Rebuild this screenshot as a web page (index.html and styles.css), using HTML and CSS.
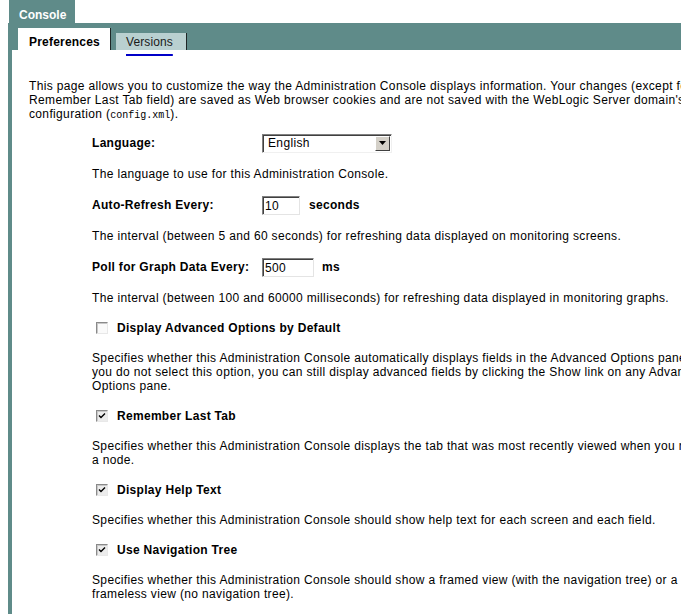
FILE: index.html
```html
<!DOCTYPE html>
<html>
<head>
<meta charset="utf-8">
<title>Console Preferences</title>
<link rel="stylesheet" href="styles.css">
</head>
<body>
<div class="page">
  <div class="head"><span class="console-tab">Console</span></div>
  <div class="frame">
    <div class="tabbar">
      <div class="tab tab-active">Preferences</div>
      <div class="tab tab-other"><a href="#" class="tab-link">Versions</a></div>
    </div>
    <div class="content">
      <p class="intro">This page allows you to customize the way the Administration Console displays information. Your changes (except for the Remember Last Tab field) are saved as Web browser cookies and are not saved with the WebLogic Server domain's configuration (<code class="mono">config.xml</code>).</p>
      <div class="form">
        <div class="row">
          <span class="lbl">Language:</span>
          <div class="select"><span class="select-text">English</span><span class="select-btn"><svg width="7" height="4" viewBox="0 0 7 4"><path d="M0 0H7L3.5 4Z" fill="#000"/></svg></span></div>
        </div>
        <p class="desc">The language to use for this Administration Console.</p>
        <div class="row">
          <span class="lbl">Auto-Refresh Every:</span>
          <span class="field field-short">10</span>
          <span class="unit">seconds</span>
        </div>
        <p class="desc">The interval (between 5 and 60 seconds) for refreshing data displayed on monitoring screens.</p>
        <div class="row">
          <span class="lbl">Poll for Graph Data Every:</span>
          <span class="field field-long">500</span>
          <span class="unit unit-ms">ms</span>
        </div>
        <p class="desc">The interval (between 100 and 60000 milliseconds) for refreshing data displayed in monitoring graphs.</p>
        <div class="row row-cb">
          <span class="cb"></span>
          <span class="cb-label">Display Advanced Options by Default</span>
        </div>
        <p class="desc">Specifies whether this Administration Console automatically displays fields in the Advanced Options pane. If<br>you do not select this option, you can still display advanced fields by clicking the Show link on any Advanced<br>Options pane.</p>
        <div class="row row-cb">
          <span class="cb cb-on"><svg width="10" height="10" viewBox="0 0 10 10"><path d="M2 4.5L4 6.5L8 2.5" fill="none" stroke="#000" stroke-width="1.4"/></svg></span>
          <span class="cb-label">Remember Last Tab</span>
        </div>
        <p class="desc">Specifies whether this Administration Console displays the tab that was most recently viewed when you return to a node.</p>
        <div class="row row-cb">
          <span class="cb cb-on"><svg width="10" height="10" viewBox="0 0 10 10"><path d="M2 4.5L4 6.5L8 2.5" fill="none" stroke="#000" stroke-width="1.4"/></svg></span>
          <span class="cb-label">Display Help Text</span>
        </div>
        <p class="desc">Specifies whether this Administration Console should show help text for each screen and each field.</p>
        <div class="row row-cb">
          <span class="cb cb-on"><svg width="10" height="10" viewBox="0 0 10 10"><path d="M2 4.5L4 6.5L8 2.5" fill="none" stroke="#000" stroke-width="1.4"/></svg></span>
          <span class="cb-label">Use Navigation Tree</span>
        </div>
        <p class="desc">Specifies whether this Administration Console should show a framed view (with the navigation tree) or a frameless view (no navigation tree).</p>
      </div>
    </div>
  </div>
</div>
</body>
</html>
```

FILE: styles.css
```css
html, body {
  margin: 0;
  padding: 0;
  overflow: hidden;
  background: #fff;
}
body {
  font-family: "Liberation Sans", Arial, sans-serif;
  font-size: 12px;
  letter-spacing: 0.35px;
  color: #000;
}
.page {
  width: 730px;
  padding-left: 8px;
}
.head {
  height: 23px;
  display: flex;
}
.console-tab {
  margin-left: 1px;
  width: 66px;
  box-sizing: border-box;
  background: #5f8b89;
  color: #fff;
  font-weight: bold;
  letter-spacing: 0;
  line-height: 12px;
  padding: 9px 0 0 10px;
}
.frame {
  border-left: 4px solid #5f8b89;
  min-height: 700px;
}
.tabbar {
  background: #5f8b89;
  height: 27px;
  display: flex;
  align-items: flex-end;
  padding-left: 6px;
  gap: 5px;
}
.tab {
  box-sizing: border-box;
  line-height: 14px;
  border-right: 1px solid #1e2626;
}
.tab-active {
  width: 93px;
  height: 22px;
  background: #fff;
  font-weight: bold;
  letter-spacing: 0.2px;
  padding: 7px 0 0 11px;
}
.tab-other {
  width: 71px;
  height: 17px;
  background: #b9d0d0;
  padding: 2px 0 0 10px;
  letter-spacing: 0.1px;
}
.tab-link {
  color: #1a1a1a;
  text-decoration: underline;
  text-decoration-color: #0000c8;
  text-decoration-thickness: 2px;
  text-underline-offset: 8px;
}
.content {
  padding: 29px 8px 0 17px;
}
.intro {
  margin: 0 0 10px;
  line-height: 14px;
}
.mono {
  font-family: "Liberation Mono", "Courier New", monospace;
  font-size: 10px;
  letter-spacing: 0;
}
.form {
  margin-left: 63px;
  display: flex;
  flex-direction: column;
  gap: 14px;
}
.row {
  display: flex;
  align-items: center;
  height: 20px;
}
.row-cb {
  height: 18px;
}
.lbl {
  width: 170px;
  font-weight: bold;
  letter-spacing: 0.3px;
}
.desc {
  margin: 0;
  line-height: 14px;
}
.select {
  width: 130px;
  height: 19px;
  box-sizing: border-box;
  display: flex;
  align-items: center;
  justify-content: space-between;
  border: 1px solid;
  border-color: #808080 #f0f0f0 #f0f0f0 #808080;
  box-shadow: inset 1px 1px 0 #404040;
  padding: 0 1px 0 5px;
  background: #fff;
}
.select-text {
  line-height: 14px;
}
.select-btn {
  width: 15px;
  height: 15px;
  box-sizing: border-box;
  background: #d4d0c8;
  border: 1px solid;
  border-color: #fff #404040 #404040 #fff;
  display: flex;
  align-items: center;
  justify-content: center;
}
.field {
  height: 19px;
  box-sizing: border-box;
  border: 1px solid;
  border-color: #808080 #e4e4e4 #e4e4e4 #808080;
  box-shadow: inset 1px 1px 0 #404040;
  padding: 2px 0 0 2px;
  line-height: 14px;
  background: #fff;
}
.field-short {
  width: 38px;
}
.field-long {
  width: 52px;
}
.unit {
  font-weight: bold;
  letter-spacing: 0.3px;
  margin-left: 9px;
}
.unit-ms {
  margin-left: 8px;
}
.cb {
  width: 12px;
  height: 12px;
  box-sizing: border-box;
  margin-left: 4px;
  border: 1px solid;
  border-color: #8a8a8a #e8e8e8 #e8e8e8 #8a8a8a;
  box-shadow: inset 1px 1px 0 #c8c8c8;
  background: #fafafa;
  display: flex;
  align-items: center;
  justify-content: center;
}
.cb-on {
  background: #ececec;
}
.cb-label {
  margin-left: 9px;
  font-weight: bold;
  letter-spacing: 0.3px;
}
```
